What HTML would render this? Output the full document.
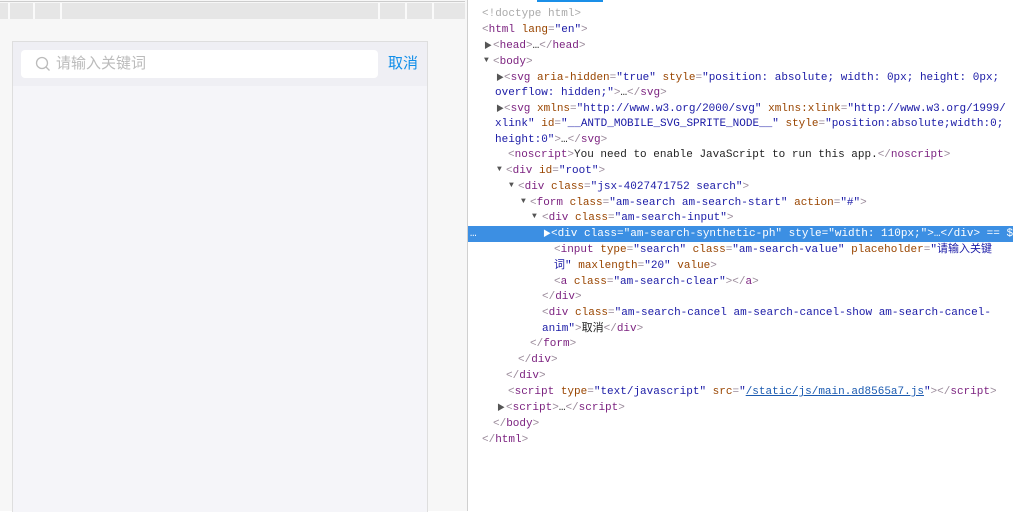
<!DOCTYPE html>
<html><head><meta charset="utf-8"><style>
body{margin:0;width:1013px;height:511px;background:#fff;position:relative;overflow:hidden;font-family:"Liberation Sans","Noto Sans CJK SC",sans-serif}
.l{position:absolute;left:0;top:0;width:467px;height:511px;background:#f7f7f7;border-right:1px solid #d0d0d0}
.strip{position:absolute;left:0;top:3px;width:465px;height:16px;background:#e6e6e6}
.strip i{position:absolute;top:0;width:2px;height:16px;background:#fafafa}
.dev{position:absolute;left:12px;top:41px;width:414px;height:470px;border:1px solid #dedede;border-bottom:none;background:#f5f5f9}
.sb{position:absolute;left:0;top:0;width:414px;height:44px;background:#efeff4}
.inp{position:absolute;left:8px;top:8px;width:357px;height:28px;background:#fff;border-radius:4px}
.ph{position:absolute;left:35px;top:5px;font-size:15px;color:#bbb;line-height:18px}
.cancel{position:absolute;left:375px;top:12px;font-size:15px;color:#108ee9;line-height:20px}
.r{position:absolute;left:468px;top:0;width:545px;height:511px;font-family:"Liberation Mono","Noto Sans CJK SC",monospace;font-size:11px;color:#222}
.ln{position:absolute;white-space:pre;line-height:15px;height:15px;margin-top:2px}
.t{color:#7a1f7e}.b{color:#9a8a9a}.a{color:#994500}.v{color:#1a1aa6}.g{color:#999}
.tri{position:absolute;font-size:8px;color:#555;margin-top:2px}
.hl{position:absolute;left:0;top:226px;width:545px;height:16px;background:#3c8fe3}
.w,.w *{color:#fff}
</style></head><body>
<div class="l">
<div style="position:absolute;left:0;top:1px;width:465px;height:1px;background:#ccc"></div>
<div class="strip"><i style="left:8px"></i><i style="left:33px"></i><i style="left:60px"></i><i style="left:378px"></i><i style="left:405px"></i><i style="left:432px"></i></div>
<div class="dev"><div class="sb"><div class="inp">
<svg style="position:absolute;left:14px;top:6px" width="16" height="16" viewBox="0 0 16 16"><circle cx="7" cy="7" r="5.5" fill="none" stroke="#bbb" stroke-width="1.3"/><path d="M11 11l3.5 3.5" stroke="#bbb" stroke-width="1.3"/></svg>
<div class="ph">请输入关键词</div></div><div class="cancel">取消</div></div></div>
</div>
<div style="position:absolute;left:537px;top:0;width:66px;height:2px;background:#1a8fe8"></div>
<div class="r">
<div class="hl"></div>
<div class="ln" style="left:14px;top:5px;color:#aaa">&lt;!doctype html&gt;</div>
<div class="ln" style="left:14px;top:21px"><span class="b">&lt;</span><span class="t">html</span> <span class="a">lang</span><span class="b">=</span><span class="v">"en"</span><span class="b">&gt;</span></div>
<div class="tri" style="left:16px;top:38px">▶</div><div class="ln" style="left:25px;top:37px"><span class="b">&lt;</span><span class="t">head</span><span class="b">&gt;</span>…<span class="b">&lt;/</span><span class="t">head</span><span class="b">&gt;</span></div>
<div class="tri" style="left:16px;top:54px">▼</div><div class="ln" style="left:25px;top:53px"><span class="b">&lt;</span><span class="t">body</span><span class="b">&gt;</span></div>
<div class="tri" style="left:28px;top:70px">▶</div><div class="ln" style="left:36px;top:69px"><span class="b">&lt;</span><span class="t">svg</span> <span class="a">aria-hidden</span><span class="b">=</span><span class="v">"true"</span> <span class="a">style</span><span class="b">=</span><span class="v">"position: absolute; width: 0px; height: 0px;</span></div>
<div class="ln" style="left:27px;top:84px"><span class="v">overflow: hidden;"</span><span class="b">&gt;</span>…<span class="b">&lt;/</span><span class="t">svg</span><span class="b">&gt;</span></div>
<div class="tri" style="left:28px;top:101px">▶</div><div class="ln" style="left:36px;top:100px"><span class="b">&lt;</span><span class="t">svg</span> <span class="a">xmlns</span><span class="b">=</span><span class="v">"http://www.w3.org/2000/svg"</span> <span class="a">xmlns:xlink</span><span class="b">=</span><span class="v">"http://www.w3.org/1999/</span></div>
<div class="ln" style="left:27px;top:115px"><span class="v">xlink"</span> <span class="a">id</span><span class="b">=</span><span class="v">"__ANTD_MOBILE_SVG_SPRITE_NODE__"</span> <span class="a">style</span><span class="b">=</span><span class="v">"position:absolute;width:0;</span></div>
<div class="ln" style="left:27px;top:131px"><span class="v">height:0"</span><span class="b">&gt;</span>…<span class="b">&lt;/</span><span class="t">svg</span><span class="b">&gt;</span></div>
<div class="ln" style="left:40px;top:146px"><span class="b">&lt;</span><span class="t">noscript</span><span class="b">&gt;</span>You need to enable JavaScript to run this app.<span class="b">&lt;/</span><span class="t">noscript</span><span class="b">&gt;</span></div>
<div class="tri" style="left:29px;top:163px">▼</div><div class="ln" style="left:38px;top:162px"><span class="b">&lt;</span><span class="t">div</span> <span class="a">id</span><span class="b">=</span><span class="v">"root"</span><span class="b">&gt;</span></div>
<div class="tri" style="left:41px;top:179px">▼</div><div class="ln" style="left:50px;top:178px"><span class="b">&lt;</span><span class="t">div</span> <span class="a">class</span><span class="b">=</span><span class="v">"jsx-4027471752 search"</span><span class="b">&gt;</span></div>
<div class="tri" style="left:53px;top:195px">▼</div><div class="ln" style="left:62px;top:194px"><span class="b">&lt;</span><span class="t">form</span> <span class="a">class</span><span class="b">=</span><span class="v">"am-search am-search-start"</span> <span class="a">action</span><span class="b">=</span><span class="v">"#"</span><span class="b">&gt;</span></div>
<div class="tri" style="left:64px;top:210px">▼</div><div class="ln" style="left:74px;top:209px"><span class="b">&lt;</span><span class="t">div</span> <span class="a">class</span><span class="b">=</span><span class="v">"am-search-input"</span><span class="b">&gt;</span></div>
<div class="ln w" style="left:2px;top:225px">…</div>
<div class="tri w" style="left:75px;top:226px">▶</div><div class="ln w" style="left:83px;top:225px">&lt;div class="am-search-synthetic-ph" style="width: 110px;"&gt;…&lt;/div&gt; == $0</div>
<div class="ln" style="left:86px;top:241px"><span class="b">&lt;</span><span class="t">input</span> <span class="a">type</span><span class="b">=</span><span class="v">"search"</span> <span class="a">class</span><span class="b">=</span><span class="v">"am-search-value"</span> <span class="a">placeholder</span><span class="b">=</span><span class="v">"请输入关键</span></div>
<div class="ln" style="left:86px;top:257px"><span class="v">词"</span> <span class="a">maxlength</span><span class="b">=</span><span class="v">"20"</span> <span class="a">value</span><span class="b">&gt;</span></div>
<div class="ln" style="left:86px;top:273px"><span class="b">&lt;</span><span class="t">a</span> <span class="a">class</span><span class="b">=</span><span class="v">"am-search-clear"</span><span class="b">&gt;&lt;/</span><span class="t">a</span><span class="b">&gt;</span></div>
<div class="ln" style="left:74px;top:288px"><span class="b">&lt;/</span><span class="t">div</span><span class="b">&gt;</span></div>
<div class="ln" style="left:74px;top:304px"><span class="b">&lt;</span><span class="t">div</span> <span class="a">class</span><span class="b">=</span><span class="v">"am-search-cancel am-search-cancel-show am-search-cancel-</span></div>
<div class="ln" style="left:74px;top:320px"><span class="v">anim"</span><span class="b">&gt;</span>取消<span class="b">&lt;/</span><span class="t">div</span><span class="b">&gt;</span></div>
<div class="ln" style="left:62px;top:335px"><span class="b">&lt;/</span><span class="t">form</span><span class="b">&gt;</span></div>
<div class="ln" style="left:50px;top:351px"><span class="b">&lt;/</span><span class="t">div</span><span class="b">&gt;</span></div>
<div class="ln" style="left:38px;top:367px"><span class="b">&lt;/</span><span class="t">div</span><span class="b">&gt;</span></div>
<div class="ln" style="left:40px;top:383px"><span class="b">&lt;</span><span class="t">script</span> <span class="a">type</span><span class="b">=</span><span class="v">"text/javascript"</span> <span class="a">src</span><span class="b">=</span><span class="v">"<u style="color:#1a5ab0">/static/js/main.ad8565a7.js</u>"</span><span class="b">&gt;&lt;/</span><span class="t">script</span><span class="b">&gt;</span></div>
<div class="tri" style="left:29px;top:400px">▶</div><div class="ln" style="left:38px;top:399px"><span class="b">&lt;</span><span class="t">script</span><span class="b">&gt;</span>…<span class="b">&lt;/</span><span class="t">script</span><span class="b">&gt;</span></div>
<div class="ln" style="left:25px;top:415px"><span class="b">&lt;/</span><span class="t">body</span><span class="b">&gt;</span></div>
<div class="ln" style="left:14px;top:431px"><span class="b">&lt;/</span><span class="t">html</span><span class="b">&gt;</span></div>
</div>
</body></html>
